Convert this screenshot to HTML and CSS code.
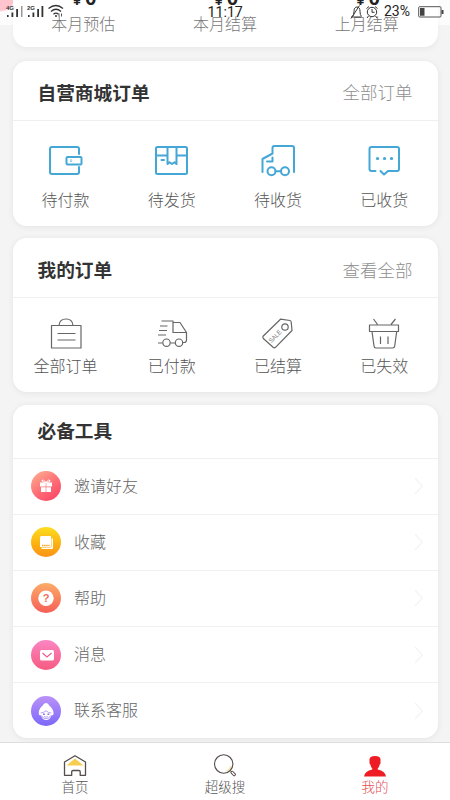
FILE: index.html
```html
<!DOCTYPE html>
<html lang="zh-CN">
<head>
<meta charset="utf-8">
<title>我的</title>
<link rel="stylesheet" href="styles.css">
</head>
<body>
<div class="app">
  <header class="status">
    <svg class="status-left" width="70" height="24" viewBox="0 0 70 24">
      <g fill="#333"><text x="6" y="9.500" class="net">4G</text><text x="27" y="9.500" class="net">2G</text>
      <path d="M7 15h1.600v2H7zM11.500 12.500h1.800v4.500h-1.800zM16.200 9h1.800v8h-1.800zM28 15h1.600v2H28zM32.500 12.500h1.800v4.500h-1.800zM37.200 9h1.800v8h-1.800zM41.500 6h1.800v11h-1.800z"/><path fill="#999" d="M21 6h1.500v11H21z"/></g>
      <g fill="none" stroke="#333" stroke-width="1.300"><path d="M48.500 8.500Q56 2.500 63 8.500M51 11.500Q56 7 61 11.500M53.500 14.300Q56 12 58.500 14.300"/></g>
      <circle cx="56" cy="16" r="1" fill="#333"/><path d="M59 16.500v-3m2.500 0v3" stroke="#555"/>
    </svg>
    <span class="clock">11:17</span>
    <div class="status-right">
      <svg width="30" height="16" viewBox="0 0 30 16" fill="none" stroke="#333">
        <path d="M1 13h10M2.500 12.500Q4 11 4 7.500 4 3 7 3t3 4.500q0 3.500 1.500 5M1 14.500L9.500 1.500"/>
        <circle cx="22" cy="8" r="4.700"/><path d="M22 5v3.300h2.500M16.500 4.500l2.500-2M27.500 4.500l-2.500-2M18.500 12l-1.500 2m8.500-2l1.500 2"/>
      </svg>
      <span class="pct">23%</span>
      <svg width="26" height="12" viewBox="0 0 26 12"><rect x=".7" y=".7" width="22.300" height="10.300" rx="1" fill="none" stroke="#555"/><path d="M2 2h4.500v7.800H2zM23.500 4H25.500v4h-2z" fill="#444"/></svg>
    </div>
  </header>
  <main class="page">
    <section class="card summary">
      <div class="stat"><b>¥<strong>0</strong></b><span>本月预估</span></div>
      <div class="stat"><b>¥<strong>0</strong></b><span>本月结算</span></div>
      <div class="stat"><b>¥<strong>0</strong></b><span>上月结算</span></div>
    </section>

    <section class="card mall">
      <div class="head"><h2>自营商城订单</h2><a>全部订单</a></div>
      <div class="grid">
        <div class="item"><svg width="36" height="36" viewBox="0 0 36 36" class="blue">
          <path d="M32 11V6q0-2-2-2H5q-2 0-2 2v23q0 2 2 2H30q2 0 2-2v-5"/><rect x="19.500" y="14" width="15" height="7.500" rx="1"/><circle cx="24" cy="17.700" r=".2"/></svg><span>待付款</span></div>
        <div class="item"><svg width="36" height="36" viewBox="0 0 36 36" class="blue">
          <rect x="3" y="4" width="31" height="27" rx="1.500"/><path d="M3 12.500h11.500M23.500 12.500H34M14.500 4v17l2-1.800 2.500 1.800 2.500-1.800 2 1.800V4M8.500 17H11"/></svg><span>待发货</span></div>
        <div class="item"><svg width="36" height="36" viewBox="0 0 36 36" class="blue">
          <path d="M2.500 29V16l10-5.500V5q0-2 2-2h17.500q2 0 2 2v24M12.500 14.500V18.500h-5.500M15.500 28.300h5"/><circle cx="11.500" cy="28.300" r="4"/><circle cx="25" cy="28.300" r="4"/></svg><span>待收货</span></div>
        <div class="item"><svg width="36" height="36" viewBox="0 0 36 36" class="blue">
          <path d="M9.500 28H5.500q-2 0-2-2V6q0-2 2-2h25.500q2 0 2 2v20q0 2-2 2H22l-4 3.500L14.500 28"/><path d="M11.500 15.500h.1M18.500 15.500h.1M25.500 15.500h.1" stroke-width="3.200"/></svg><span>已收货</span></div>
      </div>
    </section>

    <section class="card orders">
      <div class="head"><h2>我的订单</h2><a>查看全部</a></div>
      <div class="grid">
        <div class="item"><svg width="36" height="36" viewBox="0 0 36 36" class="gray">
          <path d="M3.500 9.500h29.500v22.500H3.500zM11 9.500Q11.500 3 18 3t7 6.500M9.500 17.500h18M9.500 24h18"/></svg><span>全部订单</span></div>
        <div class="item"><svg width="36" height="36" viewBox="0 0 36 36" class="gray">
          <path d="M7.500 5H19v11.500h13.500M19 6.500h7l6.500 10V24q0 2.500-2.500 2.500h-1M6 10h7.500M5 14.500h8M4 19h8M4 27h4.500M16.500 27h5"/><circle cx="12.500" cy="26.700" r="3.700"/><circle cx="25" cy="26.700" r="3.700"/></svg><span>已付款</span></div>
        <div class="item"><svg width="36" height="36" viewBox="0 0 36 36" class="gray">
          <path d="M20.500 3.200L30 4.500q1 .3 1.200 1.500l.8 8.500L15.500 31.300q-1.200 1-2.400 0L3.300 22.500q-1-1.300 0-2.500z"/><circle cx="25" cy="11" r="3.200"/><text class="sale" transform="translate(11.500 27.300) rotate(-46)" textLength="15" lengthAdjust="spacingAndGlyphs">SALE</text></svg><span>已结算</span></div>
        <div class="item"><svg width="36" height="36" viewBox="0 0 36 36" class="gray">
          <path d="M11 9H3.500v6.500h29V9H25M11 9h14M7.500 3l4 5.500M29.500 3L25 8.500M6 15.500l2 14.500q.2 2 2 2H26.500q2 0 2.200-2l2-14.500M14.500 20.500V28M22 20.500V28"/></svg><span>已失效</span></div>
      </div>
    </section>

    <section class="card tools">
      <div class="head"><h2>必备工具</h2></div>
      <div class="row"><i class="dot gift"><svg width="30" height="30" viewBox="0 0 30 30" fill="#fff"><path d="M9 11.500h5.700v4H9zM15.300 11.500H21v4h-5.700zM10 16.200h4.700V21H10zM15.300 16.200H20V21h-4.700z"/><path d="M15 11.500q-5-.2-4-2t4 2q3-3.800 4-2t-4 2" fill="none" stroke="#fff"/></svg></i><span>邀请好友</span><svg class="chev" width="10" height="18" viewBox="0 0 10 18"><path d="M1 1l7.500 8L1 17"/></svg></div>
      <div class="row"><i class="dot fav"><svg width="30" height="30" viewBox="0 0 30 30"><path d="M10.500 9H20v10q0 1-1 1H9V10.500Q9 9 10.500 9z" fill="#fff"/><path d="M20.500 11.500H22V21q0 1-1 1H10.500v-1.500h9q1 0 1-1z" fill="#fff"/><path d="M11 18.500h7.500" stroke="#f5a623" stroke-width="1.500" stroke-dasharray="1.500 .6"/></svg></i><span>收藏</span><svg class="chev" width="10" height="18" viewBox="0 0 10 18"><path d="M1 1l7.500 8L1 17"/></svg></div>
      <div class="row"><i class="dot help"><svg width="30" height="30" viewBox="0 0 30 30"><circle cx="15" cy="15.300" r="7.700" fill="#fff"/><text x="15" y="19.300" text-anchor="middle" class="q">?</text></svg></i><span>帮助</span><svg class="chev" width="10" height="18" viewBox="0 0 10 18"><path d="M1 1l7.500 8L1 17"/></svg></div>
      <div class="row"><i class="dot msg"><svg width="30" height="30" viewBox="0 0 30 30"><rect x="9" y="10" width="14" height="10.500" rx="1.500" fill="#fff"/><path d="M11.500 13l4.500 4 4.500-4" fill="none" stroke="#f0588f" stroke-width="1.100"/></svg></i><span>消息</span><svg class="chev" width="10" height="18" viewBox="0 0 10 18"><path d="M1 1l7.500 8L1 17"/></svg></div>
      <div class="row"><i class="dot kefu"><svg width="30" height="30" viewBox="0 0 30 30"><path d="M15 7q2.500 0 3.200 2.500Q22 12 22.500 17q.3 2.500-2.200 2.500Q19 24 15.200 24T10 19.500q-2.500 0-2.200-2.500Q8 12 11.800 9.500 12.500 7 15 7z" fill="#fff"/><path d="M9.700 17q3-.2 5.300-2.200 2.300 2 5.300 2.200M10.500 19.500q1 3.200 4.500 3.200t4.500-3.200M13 20.500q2 1.300 4 0" fill="none" stroke="#9a78f0" stroke-width=".7"/><path d="M12 18.200h1.800M16.500 18.200h1.800" stroke="#8a68e8" stroke-width="1.500"/></svg></i><span>联系客服</span><svg class="chev" width="10" height="18" viewBox="0 0 10 18"><path d="M1 1l7.500 8L1 17"/></svg></div>
    </section>
  </main>

  <nav class="tabs">
    <div class="tab"><svg width="26" height="24" viewBox="0 0 26 24"><path d="M13 4.500l8.500 7H4.500z" fill="#f7cd50"/><path d="M2.500 8L13 1.700 23.500 8v13.300h-5.300v-3.500q0-1.300-1.300-1.300H11q-1.300 0-1.300 1.300v3.500H2.500z" fill="none" stroke="#554c4c" stroke-width="1.300" stroke-linejoin="round"/></svg><span>首页</span></div>
    <div class="tab"><svg width="26" height="24" viewBox="0 0 26 24" fill="none"><path d="M19 12a7.500 7.500 0 0 1-5 5" stroke="#f8e6a8" stroke-width="1.300"/><circle cx="11.700" cy="10" r="9.200" stroke="#554c4c" stroke-width="1.100"/><path d="M18.200 16.500l1.500 1.500" stroke="#554c4c"/><rect x="-1.200" y="-2.600" width="2.400" height="5.200" rx="1" transform="translate(21.200 19.500) rotate(-45)" stroke="#554c4c"/></svg><span>超级搜</span></div>
    <div class="tab active"><svg width="26" height="24" viewBox="0 0 26 24" fill="#ee1c25"><path d="M7.500 5Q8 2 13 2T18.500 5v4q0 1-.8 1.500-.5 2.500-2 4v1q7.500 1.500 8.300 7H2q.8-5.500 8.300-7v-1q-1.500-1.500-2-4-.8-.5-.8-1.500z"/></svg><span>我的</span></div>
  </nav>
</div>
</body>
</html>
```
FILE: styles.css
```css
* { box-sizing: border-box; }
body { margin: 0; font-family: "Noto Sans", "Noto Sans CJK SC", sans-serif; font-weight: 300; }
h2 { margin: 0; }
svg { display: block; flex: none; }

.app { position: relative; width: 450px; height: 800px; overflow: hidden; display: flex; flex-direction: column; background: radial-gradient(ellipse 15px 12px at 0 0, #ffc4cd 85%, transparent), linear-gradient(#fcfcfc 25px, #f4f4f4 25px); }

.status { position: absolute; inset: 0 0 auto; height: 25px; z-index: 2; color: #222; }
.status-left { position: absolute; left: 0; top: 0; }
.net { font: bold 6px "Liberation Sans", sans-serif; }
.clock { position: absolute; left: 207.500px; top: 3px; font: 400 14.200px/18px Roboto, sans-serif; }
.status-right { position: absolute; right: 6px; top: 3px; display: flex; align-items: center; height: 17px; }
.status-right svg:first-child { margin-right: 4px; }
.pct { width: 29px; margin-right: 5px; font: 400 14px/17px Roboto, sans-serif; }

.page { flex: 1; min-height: 0; padding: 0 12.500px; display: flex; flex-direction: column; }
.card { background: #fff; border-radius: 14px; box-shadow: 0 1px 6px rgba(0, 0, 0, .07); flex: none; }
.summary { height: 47px; margin-bottom: 14px; display: grid; grid-template-columns: repeat(3, 1fr); border-radius: 0 0 14px 14px; box-shadow: 0 3px 5px rgba(0, 0, 0, .04); }
.stat { display: flex; flex-direction: column; align-items: center; color: #777; font-size: 16px; line-height: 24px; }
.stat b { display: flex; align-items: baseline; gap: 4px; height: 24px; margin: -14.500px 0 2.500px 3px; color: #222; font: 500 15px/24px Roboto, sans-serif; }
.stat strong { font-size: 20px; }

.head { display: flex; justify-content: space-between; align-items: center; padding: 0 25px; border-bottom: 1.500px solid #efefef; }
.head h2 { color: #333; font-size: 18.700px; font-weight: 700; line-height: 28px; }
.head a { margin-top: -2px; color: #8f8f8f; font-size: 17.500px; }
.grid { display: grid; grid-template-columns: repeat(4, 1fr); }
.item { display: flex; flex-direction: column; align-items: center; color: #555; font-size: 16px; line-height: 24px; }
.blue { fill: none; stroke: #45a7d6; stroke-width: 2; stroke-linecap: round; stroke-linejoin: round; }
.gray { fill: none; stroke: #666; stroke-width: 1.200; stroke-linejoin: round; }
.sale { fill: #777; stroke: none; font: 6.500px "Liberation Sans", sans-serif; }

.mall { height: 165px; margin-bottom: 12px; }
.mall .head { height: 60px; padding-top: 4px; }
.mall .grid { padding-top: 22px; }
.mall .item { gap: 9px; }
.mall .item svg { margin-right: 1px; }
.orders { height: 154px; margin-bottom: 12.500px; }
.orders .head { height: 60px; padding-top: 5px; }
.orders .grid { padding-top: 18px; }
.orders .item { gap: 2px; }

.tools { height: 333.500px; }
.tools .head { height: 54px; }
.row { display: flex; align-items: center; height: 56.200px; padding: 0 14px 0 18.500px; border-bottom: 1.500px solid #f0f0f0; color: #666; font-size: 16px; line-height: 24px; }
.row:last-child { border-bottom: 0; padding-bottom: 1px; }
.row span { flex: 1; margin: -1px 0 0 13px; }
.dot { width: 30px; height: 30px; border-radius: 50%; }
.gift { background: linear-gradient(145deg, #ffb392, #fd6b75 55%, #fb3d61); }
.fav { background: linear-gradient(#fdde20, #fcae12 60%, #fa9217); }
.help { background: linear-gradient(#fdac68, #f55f58); }
.msg { background: linear-gradient(#fb86c3, #f65a80); }
.kefu { background: linear-gradient(#ba91f8, #7c69fa); }
.q { fill: #f17058; font: bold 11px "Liberation Sans", sans-serif; }
.chev { fill: none; stroke: #f4f4f4; stroke-width: 1.200; }

.tabs { position: relative; height: 58px; background: #fff; border-top: 1px solid #ddd; display: grid; grid-template-columns: repeat(3, 1fr); }
.tab { display: flex; flex-direction: column; align-items: center; padding-top: 10.500px; color: #555; font-size: 13.500px; line-height: 18px; }
.active { color: #e34e53; }
```
